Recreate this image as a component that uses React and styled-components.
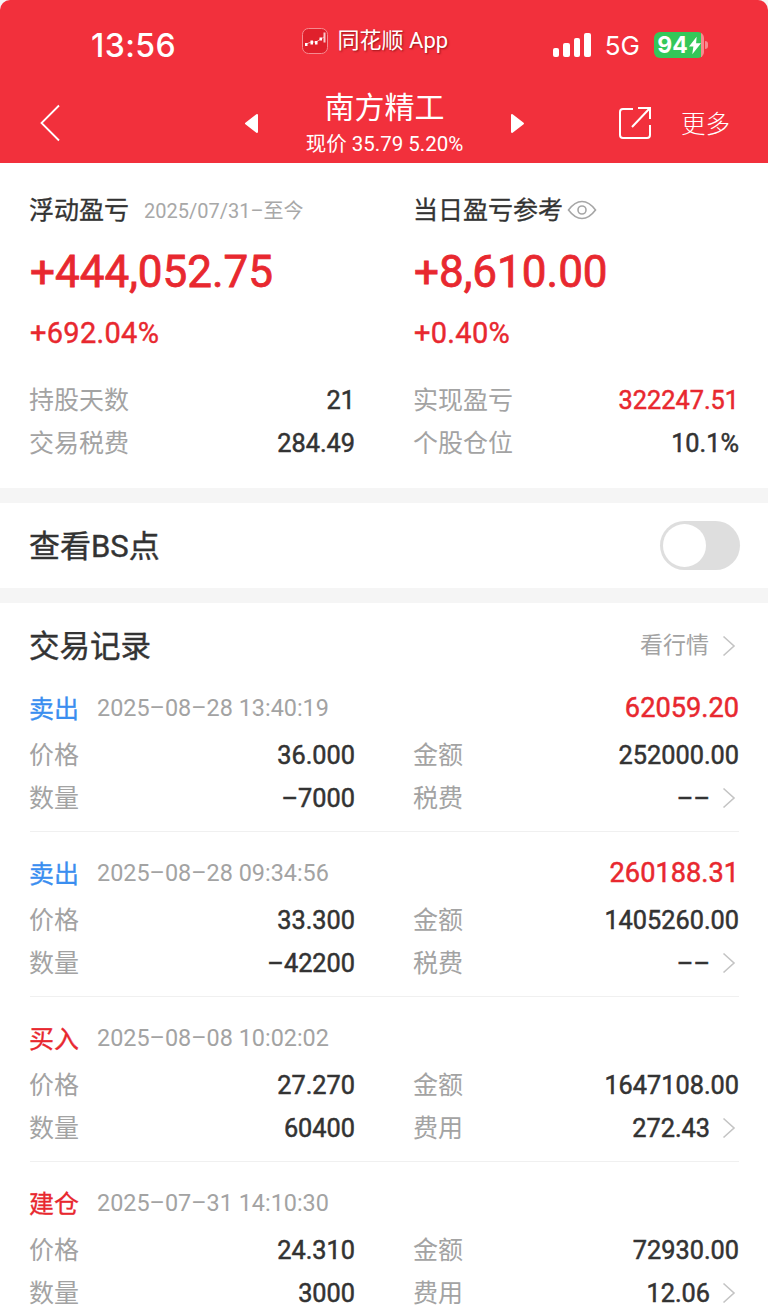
import React from 'react';
import styled, { createGlobalStyle } from 'styled-components';

const GlobalStyle = createGlobalStyle`
  html, body {
    margin: 0;
    padding: 0;
    background: #fff;
  }
  body {
    font-family: Roboto, "Noto Sans CJK SC", sans-serif;
  }
`;

const records = [
  { type: '卖出', sell: true, time: '2025–08–28 13:40:19', profit: '62059.20', price: '36.000', amount: '252000.00', qty: '–7000', feeLabel: '税费', fee: '––' },
  { type: '卖出', sell: true, time: '2025–08–28 09:34:56', profit: '260188.31', price: '33.300', amount: '1405260.00', qty: '–42200', feeLabel: '税费', fee: '––' },
  { type: '买入', time: '2025–08–08 10:02:02', price: '27.270', amount: '1647108.00', qty: '60400', feeLabel: '费用', fee: '272.43' },
  { type: '建仓', time: '2025–07–31 14:10:30', price: '24.310', amount: '72930.00', qty: '3000', feeLabel: '费用', fee: '12.06' },
];

const Chevron = ({ color = '#c4c4c4' }) => (
  <ChevronSvg viewBox="0 0 14 22" fill="none" stroke={color} strokeWidth="1.6">
    <path d="M1.5 1.5 12 11 1.5 20.5" />
  </ChevronSvg>
);

const Page = () => (
  <Screen>
    <Header>
      <StatusBar>
        <Clock>13:56</Clock>
        <AppBadge>
          <AppIcon viewBox="0 0 26 26">
            <rect x="0.5" y="0.5" width="25" height="25" rx="6" fill="#e0202c" stroke="#f58a90" />
            <path d="M3 16.500 9 14l5 0 5-3 3-2" stroke="#fff" strokeWidth="0.6" fill="none" />
            <rect x="3" y="15" width="2.500" height="3" fill="#fff" />
            <rect x="8.500" y="12.500" width="2.500" height="4" fill="#fff" />
            <rect x="13" y="13" width="2.500" height="3.500" fill="#fff" />
            <rect x="17.500" y="9.500" width="2.500" height="3" fill="#fff" />
            <rect x="21.500" y="4.500" width="2" height="10" fill="#fbc7ca" />
          </AppIcon>
          <AppName>同花顺 App</AppName>
        </AppBadge>
        <StatusRight>
          <Signal>
            <Bar $h={9} />
            <Bar $h={14} />
            <Bar $h={19} />
            <Bar $h={24} />
          </Signal>
          <Network>5G</Network>
          <Battery>
            <BatteryBody $level={94}>
              94
              <svg width="12" height="19" viewBox="0 0 11 16" fill="#fff">
                <path d="M7 0 0 9h4l-1 7 8-10H6.500z" />
              </svg>
            </BatteryBody>
            <BatteryCap />
          </Battery>
        </StatusRight>
      </StatusBar>
      <NavBar>
        <BackButton viewBox="0 0 22 38" fill="none" stroke="#fff" strokeWidth="1.8">
          <path d="M20 1.500 2.500 19 20 36.500" />
        </BackButton>
        <StockSwitch>
          <svg width="15" height="21" viewBox="0 0 15 21" fill="#fff" stroke="#fff" strokeWidth="2" strokeLinejoin="round">
            <path d="M13 2 2 10.500 13 19z" />
          </svg>
          <StockTitle>
            <StockName>南方精工</StockName>
            <StockPrice>现价 35.79 5.20%</StockPrice>
          </StockTitle>
          <svg width="15" height="21" viewBox="0 0 15 21" fill="#fff" stroke="#fff" strokeWidth="2" strokeLinejoin="round">
            <path d="M2 2l11 8.500L2 19z" />
          </svg>
        </StockSwitch>
        <NavActions>
          <svg width="34" height="34" viewBox="0 0 34 34" fill="none" stroke="#fff" strokeWidth="2">
            <path d="M15 3H5a3 3 0 0 0-3 3v23a3 3 0 0 0 3 3h24a3 3 0 0 0 3-3V19" />
            <path d="M14 21 32 2M20 2h12v11" />
          </svg>
          <MoreText>更多</MoreText>
        </NavActions>
      </NavBar>
    </Header>

    <Summary>
      <TwoCols>
        <div>
          <SummaryHead $gap={15}>
            <SummaryTitle>浮动盈亏</SummaryTitle>
            <DateRange>2025/07/31–至今</DateRange>
          </SummaryHead>
          <BigNumber>+444,052.75</BigNumber>
          <Percent>+692.04%</Percent>
        </div>
        <div>
          <SummaryHead $gap={4}>
            <SummaryTitle>当日盈亏参考</SummaryTitle>
            <svg width="30" height="20" viewBox="0 0 30 20" fill="none" stroke="#a6a6a6" strokeWidth="1.6">
              <path d="M1.500 10C6 4 10 1.500 15 1.500S24 4 28.500 10C24 16 20 18.500 15 18.500S6 16 1.500 10z" />
              <circle cx="15" cy="10" r="4" />
            </svg>
          </SummaryHead>
          <BigNumber>+8,610.00</BigNumber>
          <Percent>+0.40%</Percent>
        </div>
      </TwoCols>
      <SummaryStats>
        <Stat><Label>持股天数</Label><Value>21</Value></Stat>
        <Stat><Label>实现盈亏</Label><Value $red>322247.51</Value></Stat>
        <Stat><Label>交易税费</Label><Value>284.49</Value></Stat>
        <Stat><Label>个股仓位</Label><Value>10.1%</Value></Stat>
      </SummaryStats>
    </Summary>

    <ToggleRow>
      <ToggleLabel>查看BS点</ToggleLabel>
      <Toggle><Knob /></Toggle>
    </ToggleRow>

    <Trades>
      <TradesHead>
        <TradesTitle>交易记录</TradesTitle>
        <MarketLink>看行情<Chevron /></MarketLink>
      </TradesHead>
      {records.map((r) => (
        <Record key={r.time}>
          <RecordHead>
            <RecordType $sell={r.sell}>{r.type}</RecordType>
            <RecordTime>{r.time}</RecordTime>
            {r.profit && <RecordProfit>{r.profit}</RecordProfit>}
          </RecordHead>
          <RecordGrid>
            <Stat><Label>价格</Label><Value>{r.price}</Value></Stat>
            <Stat><Label>金额</Label><Value>{r.amount}</Value></Stat>
            <Stat><Label>数量</Label><Value>{r.qty}</Value></Stat>
            <Stat>
              <Label>{r.feeLabel}</Label>
              <FeeValue><Value>{r.fee}</Value><Chevron /></FeeValue>
            </Stat>
          </RecordGrid>
        </Record>
      ))}
    </Trades>
  </Screen>
);

export default function App() {
  return (
    <>
      <GlobalStyle />
      <Page />
    </>
  );
}

const Screen = styled.div`
  width: 768px;
  height: 1309px;
  overflow: hidden;
  background: #f5f5f5;
`;

const Header = styled.header`
  height: 163px;
  background: #f2303c;
  color: #fff;
  border-radius: 10px 10px 0 0;
  box-sizing: border-box;
  padding-top: 24px;
`;

const StatusBar = styled.div`
  display: flex;
  align-items: center;
  justify-content: space-between;
  height: 42px;
  padding: 0 60px 0 91px;
`;

const Clock = styled.div`
  font-family: Inter, sans-serif;
  font-size: 32px;
  font-weight: 500;
  letter-spacing: 0.4px;
`;

const AppBadge = styled.div`
  display: flex;
  align-items: center;
  gap: 10px;
  margin-top: -9px;
  margin-left: 21px;
`;

const AppIcon = styled.svg`
  width: 26px;
  height: 26px;
`;

const AppName = styled.span`
  font-size: 22px;
  line-height: 26px;
  margin-top: 1px;
  color: #fff;
  text-shadow: 1px 1px 2px rgba(90, 0, 0, 0.6);
`;

const StatusRight = styled.div`
  display: flex;
  align-items: center;
  gap: 14px;
`;

const Signal = styled.div`
  display: flex;
  align-items: flex-end;
  gap: 4px;
  height: 24px;
`;

const Bar = styled.div`
  width: 6.500px;
  height: ${(p) => p.$h}px;
  background: #fff;
  border-radius: 2px;
`;

const Network = styled.span`
  font-family: Inter, sans-serif;
  font-size: 26px;
  font-weight: 400;
`;

const Battery = styled.div`
  display: flex;
  align-items: center;
  gap: 1px;
`;

const BatteryBody = styled.div`
  display: flex;
  align-items: center;
  justify-content: center;
  gap: 1px;
  width: 50px;
  height: 26px;
  background: linear-gradient(to right, #34c759 ${(p) => p.$level}%, #f78a8f ${(p) => p.$level}%);
  border-radius: 6px;
  font-family: Inter, sans-serif;
  font-size: 23px;
  font-weight: 700;
`;

const BatteryCap = styled.div`
  width: 3px;
  height: 8px;
  background: #f78a8f;
  border-radius: 0 3px 3px 0;
`;

const NavBar = styled.div`
  position: relative;
  display: flex;
  align-items: center;
  justify-content: space-between;
  height: 97px;
  padding: 16px 38px 0 39px;
  box-sizing: border-box;
`;

const BackButton = styled.svg`
  width: 22px;
  height: 38px;
`;

const StockSwitch = styled.div`
  position: absolute;
  left: 244px;
  top: 17px;
  width: 281px;
  height: 81px;
  display: flex;
  align-items: center;
  justify-content: space-between;
`;

const StockTitle = styled.div`
  display: flex;
  flex-direction: column;
  align-items: center;
`;

const StockName = styled.div`
  font-size: 30px;
  line-height: 40px;
  margin-top: -1px;
`;

const StockPrice = styled.div`
  font-size: 20.500px;
  line-height: 28px;
  margin-top: 2px;
`;

const NavActions = styled.div`
  display: flex;
  align-items: center;
  gap: 29px;
`;

const MoreText = styled.span`
  font-size: 24.500px;
  font-weight: 300;
  padding-bottom: 1px;
`;

const Summary = styled.section`
  background: #fff;
  height: 325px;
  box-sizing: border-box;
  padding: 28px 29px 0 30px;
  margin-bottom: 15px;
`;

const TwoCols = styled.div`
  display: grid;
  grid-template-columns: 325px 325px;
  column-gap: 59px;
`;

const SummaryHead = styled.div`
  display: flex;
  align-items: center;
  gap: ${(p) => p.$gap}px;
  height: 38px;
`;

const SummaryTitle = styled.span`
  font-size: 25px;
  -webkit-text-stroke: 0.3px #333;
  color: #333;
  margin-left: -1px;
  padding-bottom: 4px;
`;

const DateRange = styled.span`
  font-size: 20px;
  color: #a8a8a8;
  padding-bottom: 2px;
`;

const BigNumber = styled.div`
  margin-top: 17px;
  font-size: 44px;
  line-height: 52px;
  -webkit-text-stroke: 0.8px #e8282f;
  color: #e8282f;
`;

const Percent = styled.div`
  margin-top: 18px;
  font-size: 29px;
  line-height: 34px;
  letter-spacing: 0.3px;
  -webkit-text-stroke: 0.4px #e8282f;
  color: #e8282f;
`;

const SummaryStats = styled(TwoCols)`
  margin-top: 28px;
  row-gap: 0;
`;

const Stat = styled.div`
  display: flex;
  align-items: center;
  justify-content: space-between;
  height: 43px;
`;

const Label = styled.span`
  font-size: 25px;
  color: #a3a3a3;
  margin-left: -1px;
  padding-bottom: 4px;
`;

const Value = styled.span`
  font-size: 25.300px;
  padding-top: 2px;
  -webkit-text-stroke: 0.5px ${(p) => (p.$red ? '#e8282f' : '#333')};
  color: ${(p) => (p.$red ? '#e8282f' : '#333')};
`;

const ToggleRow = styled.section`
  display: flex;
  align-items: center;
  justify-content: space-between;
  height: 85px;
  box-sizing: border-box;
  padding: 0 28px 0 30px;
  background: #fff;
  margin-bottom: 15px;
`;

const ToggleLabel = styled.span`
  font-size: 31px;
  -webkit-text-stroke: 0.4px #333;
  color: #333;
  margin-left: -1px;
  padding-bottom: 4px;
`;

const Toggle = styled.div`
  display: flex;
  align-items: center;
  width: 80px;
  height: 49px;
  box-sizing: border-box;
  padding: 3px;
  border-radius: 25px;
  background: #dedede;
`;

const Knob = styled.div`
  width: 43px;
  height: 43px;
  border-radius: 50%;
  background: #fff;
`;

const Trades = styled.section`
  background: #fff;
  padding: 0 29px 0 30px;
  height: 706px;
`;

const TradesHead = styled.div`
  display: flex;
  align-items: center;
  justify-content: space-between;
  height: 86px;
`;

const TradesTitle = styled.span`
  font-size: 30.500px;
  -webkit-text-stroke: 0.4px #333;
  color: #333;
  margin-left: -1px;
  padding-bottom: 5px;
`;

const MarketLink = styled.span`
  display: flex;
  align-items: center;
  gap: 13px;
  font-size: 23px;
  color: #a3a3a3;
  padding-right: 3px;
  line-height: 30px;
`;

const ChevronSvg = styled.svg`
  width: 14px;
  height: 22px;
`;

const Record = styled.div`
  height: 143px;
  box-sizing: border-box;
  border-bottom: 1px solid #f0f0f0;
  margin-bottom: 22px;
  &:last-child {
    border-bottom: none;
  }
`;

const RecordHead = styled.div`
  display: flex;
  align-items: center;
  height: 38px;
`;

const RecordType = styled.span`
  font-size: 25px;
  -webkit-text-stroke: 0.3px ${(p) => (p.$sell ? '#3a8ef0' : '#e8282f')};
  color: ${(p) => (p.$sell ? '#3a8ef0' : '#e8282f')};
  margin-left: -1px;
  padding-bottom: 3px;
`;

const RecordTime = styled.span`
  margin-left: 18px;
  font-size: 23.400px;
  color: #a3a3a3;
`;

const RecordProfit = styled.span`
  margin-left: auto;
  font-size: 27.200px;
  -webkit-text-stroke: 0.5px #e8282f;
  color: #e8282f;
`;

const RecordGrid = styled(TwoCols)`
  margin-top: 6px;
`;

const FeeValue = styled.div`
  display: flex;
  align-items: center;
  gap: 12px;
  padding-right: 3px;
`;
